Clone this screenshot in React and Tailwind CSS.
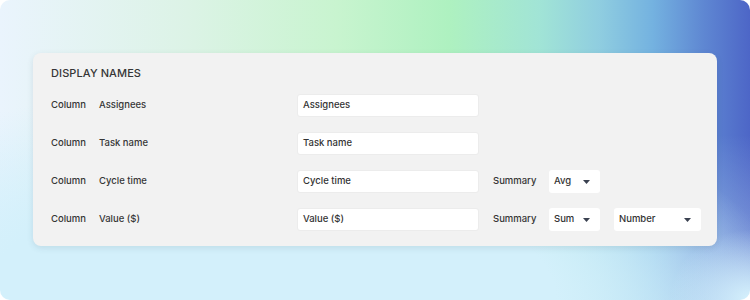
import React from "react";

const rows = [
  { name: "Assignees" },
  { name: "Task name" },
  { name: "Cycle time", summary: "Avg" },
  { name: "Value ($)", summary: "Sum", format: "Number" },
];

const Caret = () => (
  <svg width="7" height="4" viewBox="0 0 7 4" className="shrink-0">
    <path d="M0 0h7L3.5 4z" fill="#3a4150" />
  </svg>
);

const Select = ({ value, width }) => (
  <div
    className={`flex items-center justify-between h-[23px] bg-white rounded-[3px] pl-[5px] pr-[10px] text-[9.5px] text-[#333] font-medium ${width}`}
  >
    <span>{value}</span>
    <Caret />
  </div>
);

const App = () => {
  return (
    <div className="w-[750px] h-[300px] bg-white">
      <div className="w-full h-full rounded-[10px] overflow-hidden pt-[53px] px-[33px] bg-[radial-gradient(ellipse_80px_70px_at_100%_100%,#d6f2fd_0%,rgba(214,242,253,0)_100%),radial-gradient(ellipse_520px_220px_at_36%_100%,#d3f0fb_55%,rgba(211,240,251,0)_100%),linear-gradient(180deg,rgba(234,244,253,0)_45%,rgba(211,240,251,0.5)_100%),linear-gradient(90deg,#eaf4fd_0%,#dcf3e6_25%,#c8f4cf_45%,#aef1c0_60%,#a1e4d6_72%,#8fcde0_80%,#74b2e0_87%,#5e86d2_94%,#4d66c7_100%)]">
        <div className="w-[684px] h-[193px] bg-[#f2f2f2] rounded-[8px] shadow-[0_2px_6px_rgba(40,70,90,0.12)] pt-[13px] pl-[18px] font-['Inter','Liberation_Sans',sans-serif] text-[#363636]">
          <h2 className="text-[11px] font-medium tracking-[0.1px] leading-[14px] mb-[14px]">
            DISPLAY NAMES
          </h2>
          <div className="flex flex-col gap-[15px]">
            {rows.map((r) => (
              <div key={r.name} className="flex items-center h-[23px] text-[9.5px] font-medium">
                <span className="w-[48px]">Column</span>
                <span className="w-[198px]">{r.name}</span>
                <div className="w-[182px] h-[23px] bg-white rounded-[3px] border border-[#ececec] flex items-center pl-[5px] text-[#333]">
                  {r.name}
                </div>
                {r.summary && (
                  <>
                    <span className="w-[56px] ml-[14px]">Summary</span>
                    <Select value={r.summary} width="w-[51px]" />
                  </>
                )}
                {r.format && (
                  <div className="ml-[14px]">
                    <Select value={r.format} width="w-[87px]" />
                  </div>
                )}
              </div>
            ))}
          </div>
        </div>
      </div>
    </div>
  );
};

export default App;
